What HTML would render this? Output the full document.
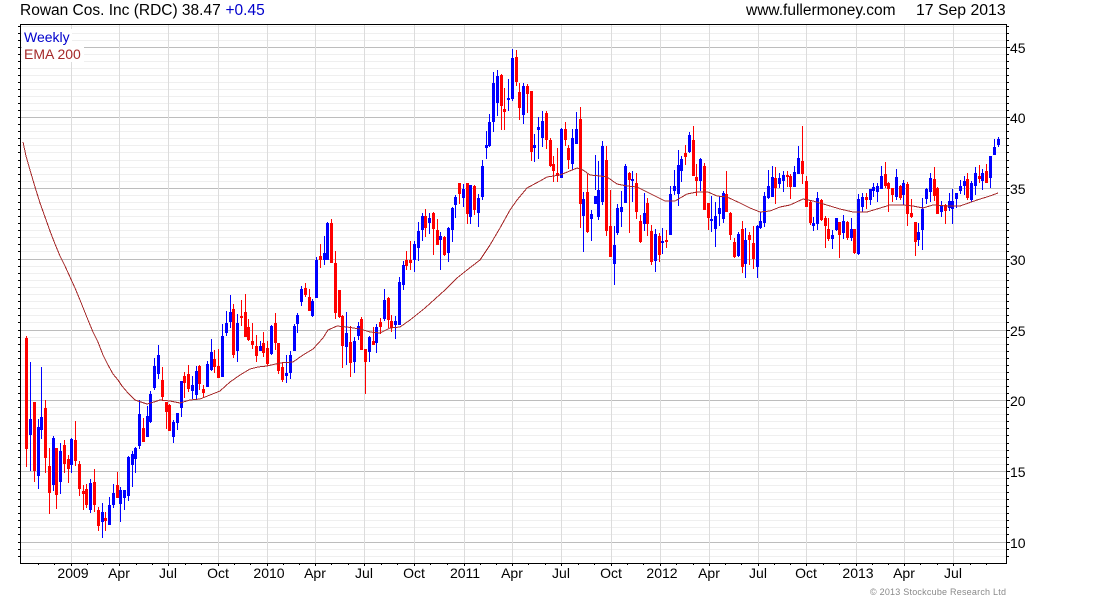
<!DOCTYPE html>
<html lang="en">
<head>
<meta charset="utf-8">
<title>Rowan Cos. Inc (RDC)</title>
<style>
html,body{margin:0;padding:0;background:#fff;width:1100px;height:600px;overflow:hidden}
svg{display:block}
text{font-family:"Liberation Sans",Arial,sans-serif;font-size:14px;fill:#000}
.t{font-size:15.5px}
</style>
</head>
<body>
<svg width="1100" height="600" viewBox="0 0 1100 600" xmlns="http://www.w3.org/2000/svg">
<g shape-rendering="crispEdges" fill="none">
<path stroke="#efefef" d="M21 26.5H1006M21 33.5H1006M21 40.5H1006M21 54.5H1006M21 61.5H1006M21 68.5H1006M21 75.5H1006M21 82.5H1006M21 89.5H1006M21 96.5H1006M21 103.5H1006M21 110.5H1006M21 124.5H1006M21 131.5H1006M21 138.5H1006M21 145.5H1006M21 152.5H1006M21 160.5H1006M21 167.5H1006M21 174.5H1006M21 181.5H1006M21 195.5H1006M21 202.5H1006M21 209.5H1006M21 216.5H1006M21 223.5H1006M21 230.5H1006M21 237.5H1006M21 244.5H1006M21 251.5H1006M21 266.5H1006M21 273.5H1006M21 280.5H1006M21 287.5H1006M21 294.5H1006M21 301.5H1006M21 308.5H1006M21 315.5H1006M21 322.5H1006M21 337.5H1006M21 344.5H1006M21 351.5H1006M21 358.5H1006M21 365.5H1006M21 372.5H1006M21 379.5H1006M21 386.5H1006M21 393.5H1006M21 407.5H1006M21 414.5H1006M21 421.5H1006M21 428.5H1006M21 435.5H1006M21 443.5H1006M21 450.5H1006M21 457.5H1006M21 464.5H1006M21 478.5H1006M21 485.5H1006M21 492.5H1006M21 499.5H1006M21 506.5H1006M21 513.5H1006M21 520.5H1006M21 527.5H1006M21 534.5H1006M21 549.5H1006M21 556.5H1006"/>
<path stroke="#bdbdbd" d="M21 47.5H1006M21 117.5H1006M21 188.5H1006M21 259.5H1006M21 330.5H1006M21 400.5H1006M21 471.5H1006M21 542.5H1006"/>
<path stroke="#dcdcdc" d="M71.5 25V563M119.5 25V563M168.5 25V563M218.5 25V563M267.5 25V563M315.5 25V563M364.5 25V563M414.5 25V563M464.5 25V563M512.5 25V563M561.5 25V563M611.5 25V563M660.5 25V563M709.5 25V563M758.5 25V563M806.5 25V563M856.5 25V563M904.5 25V563M953.5 25V563"/>
</g>

<!-- legend backgrounds -->
<rect x="22" y="29" width="50" height="17" fill="#fff"/>
<rect x="22" y="46" width="62" height="16" fill="#fff"/>

<g shape-rendering="crispEdges" fill="none">
<!-- red wicks -->
<path stroke="#ff0000" stroke-width="1" d="M26.5 336V467M34.5 402V482M45.5 400V473M49.5 448V514M56.5 448V509M64.5 440V473M68.5 455V483M75.5 421V466M79.5 461V496M83.5 485V510M86.5 484V508M94.5 469V512M98.5 507V531M105.5 512V531M117.5 472V498M143.5 418V442M162.5 367V401M166.5 402V429M169.5 404V431M184.5 372V398M188.5 365V392M199.5 365V390M203.5 385V398M214.5 350V373M218.5 349V378M233.5 304V358M241.5 300V326M245.5 294V337M248.5 319V341M252.5 323V349M256.5 335V362M263.5 332V357M267.5 341V366M275.5 313V350M278.5 343V374M282.5 362V382M305.5 283V297M309.5 289V311M320.5 244V268M331.5 219V263M335.5 251V319M339.5 290V318M342.5 315V368M350.5 326V377M361.5 317V350M365.5 349V394M373.5 327V345M380.5 318V334M388.5 297V328M391.5 315V332M406.5 251V270M410.5 241V270M425.5 209V237M433.5 212V255M437.5 219V245M444.5 236V256M459.5 183V204M467.5 183V224M474.5 185V215M501.5 74V130M504.5 88V130M516.5 50V86M519.5 83V120M527.5 84V113M531.5 91V161M546.5 111V149M550.5 138V167M553.5 156V182M557.5 148V182M565.5 122V146M568.5 145V169M580.5 107V228M587.5 174V233M606.5 146V236M610.5 190V257M629.5 172V233M636.5 173V219M640.5 215V243M647.5 198V236M651.5 225V265M659.5 233V262M666.5 230V248M685.5 145V165M693.5 126V176M696.5 164V196M704.5 163V210M708.5 203V230M726.5 171V212M730.5 212V240M734.5 238V258M742.5 221V273M749.5 232V265M753.5 226V269M775.5 167V204M787.5 171V187M790.5 174V199M802.5 126V184M806.5 176V207M810.5 200V225M821.5 199V221M825.5 216V248M828.5 218V241M839.5 222V258M847.5 221V240M854.5 229V254M866.5 193V209M885.5 162V188M888.5 182V212M892.5 188V202M900.5 185V200M907.5 182V226M911.5 199V218M915.5 222V256M934.5 167V201M937.5 187V214M945.5 204V224M967.5 173V200M979.5 165V183M986.5 164V183"/>
<!-- red bodies -->
<path stroke="#ff0000" stroke-width="3" d="M26.5 338V449M34.5 402V471M45.5 408V458M49.5 466V493M56.5 448V495M64.5 445V464M68.5 459V469M75.5 440V461M79.5 464V489M83.5 491V494M86.5 489V505M94.5 482V505M98.5 510V526M105.5 518V521M117.5 485V498M143.5 428V442M162.5 380V397M166.5 402V412M169.5 405V431M184.5 376V383M188.5 374V389M199.5 366V384M203.5 389V393M214.5 359V367M218.5 366V378M233.5 309V355M241.5 316V318M245.5 312V337M248.5 327V340M252.5 341V345M256.5 346V356M263.5 343V353M267.5 348V364M275.5 323V343M278.5 343V371M282.5 367V380M305.5 288V295M309.5 297V311M320.5 256V260M331.5 223V263M335.5 263V313M339.5 290V317M342.5 316V346M350.5 342V363M361.5 319V350M365.5 349V362M373.5 341V345M380.5 322V327M388.5 298V320M391.5 321V328M406.5 260V266M410.5 260V263M425.5 216V228M433.5 213V229M437.5 230V245M444.5 237V255M459.5 183V194M467.5 183V214M474.5 186V210M501.5 75V106M504.5 109V112M516.5 57V82M519.5 92V108M527.5 86V94M531.5 91V152M546.5 113V140M550.5 140V166M553.5 164V171M557.5 173V176M565.5 129V140M568.5 148V160M580.5 119V204M587.5 192V232M606.5 160V231M610.5 226V257M629.5 173V180M636.5 183V212M640.5 221V242M647.5 203V224M651.5 231V262M659.5 236V255M666.5 240V242M685.5 153V157M693.5 140V176M696.5 177V181M704.5 166V210M708.5 203V218M726.5 194V212M730.5 213V235M734.5 242V257M742.5 229V267M749.5 235V240M753.5 243V259M775.5 178V188M787.5 175V177M790.5 176V187M802.5 161V174M806.5 181V207M810.5 202V223M821.5 200V220M825.5 218V226M828.5 229V239M839.5 222V235M847.5 222V238M854.5 229V253M866.5 197V200M885.5 174V186M888.5 183V189M892.5 188V195M900.5 186V198M907.5 184V214M911.5 213V217M915.5 222V242M934.5 179V196M937.5 188V214M945.5 205V211M967.5 179V198M979.5 176V179M986.5 171V183"/>
<!-- blue wicks -->
<path stroke="#0000ff" stroke-width="1" d="M30.5 362V471M38.5 419V489M41.5 367V439M53.5 436V491M60.5 443V494M71.5 438V473M90.5 479V513M102.5 503V538M109.5 497V525M113.5 484V508M120.5 487V522M124.5 490V510M128.5 456V501M132.5 451V487M135.5 447V473M139.5 400V449M147.5 406V437M150.5 391V423M154.5 358V390M158.5 345V379M173.5 420V443M177.5 413V430M181.5 381V417M192.5 376V399M196.5 366V399M207.5 361V387M211.5 339V371M222.5 324V377M226.5 311V336M230.5 295V328M237.5 314V362M260.5 341V351M271.5 325V355M286.5 355V383M290.5 351V379M294.5 324V351M297.5 313V333M301.5 286V306M312.5 299V317M316.5 257V298M324.5 236V265M327.5 222V260M346.5 312V365M354.5 337V373M358.5 322V340M369.5 336V362M376.5 324V353M384.5 289V321M395.5 316V339M399.5 277V325M403.5 261V290M414.5 241V272M418.5 222V261M422.5 213V241M429.5 213V234M440.5 232V270M448.5 227V262M452.5 207V242M455.5 195V218M463.5 184V207M470.5 185V224M478.5 194V227M482.5 160V200M486.5 131V159M489.5 114V147M493.5 72V132M497.5 70V116M508.5 79V111M512.5 49V101M523.5 83V124M534.5 134V162M538.5 117V159M542.5 111V147M561.5 128V178M572.5 129V170M576.5 112V143M583.5 192V252M591.5 210V241M595.5 155V190M598.5 161V220M602.5 141V205M614.5 226V285M617.5 204V235M621.5 191V227M625.5 164V203M632.5 171V202M644.5 193V231M655.5 229V272M662.5 228V254M670.5 186V235M674.5 170V195M678.5 150V206M681.5 156V182M689.5 132V153M700.5 158V191M711.5 196V232M715.5 202V247M719.5 196V226M723.5 191V223M738.5 232V257M745.5 228V278M757.5 225V278M760.5 212V229M764.5 192V227M768.5 170V199M772.5 166V197M779.5 173V188M783.5 171V192M794.5 166V187M798.5 146V174M813.5 217V231M817.5 192V230M832.5 230V249M836.5 218V231M843.5 215V239M851.5 218V241M858.5 194V255M862.5 193V212M870.5 189V205M873.5 183V197M877.5 183V202M881.5 166V189M896.5 169V200M903.5 180V205M918.5 223V246M922.5 198V250M926.5 188V204M930.5 173V202M941.5 201V217M949.5 193V211M952.5 189V224M956.5 193V208M960.5 180V194M964.5 176V195M971.5 181V202M975.5 167V195M982.5 169V190M990.5 156V188M994.5 139V155M998.5 137V147"/>
<!-- blue bodies -->
<path stroke="#0000ff" stroke-width="3" d="M30.5 419V435M38.5 427V476M41.5 417V430M53.5 438V485M60.5 451V482M71.5 439V465M90.5 483V510M102.5 512V522M109.5 505V525M113.5 493V505M120.5 490V504M124.5 490V498M128.5 457V496M132.5 454V465M135.5 448V459M139.5 414V446M147.5 416V437M150.5 394V422M154.5 366V388M158.5 355V374M173.5 422V437M177.5 413V423M181.5 381V408M192.5 385V391M196.5 371V395M207.5 364V387M211.5 352V370M222.5 336V377M226.5 323V333M230.5 312V322M237.5 323V351M260.5 346V351M271.5 326V354M286.5 373V376M290.5 355V373M294.5 326V351M297.5 315V324M301.5 289V302M312.5 301V316M316.5 260V298M324.5 253V260M327.5 223V260M346.5 333V347M354.5 341V362M358.5 326V336M369.5 337V352M376.5 327V343M384.5 300V319M395.5 321V325M399.5 282V325M403.5 265V285M414.5 244V260M418.5 231V248M422.5 216V230M429.5 218V223M440.5 236V240M448.5 228V253M452.5 208V230M455.5 197V205M463.5 189V198M470.5 185V217M478.5 198V213M482.5 166V197M486.5 145V148M489.5 122V146M493.5 83V122M497.5 76V103M508.5 98V100M512.5 58V99M523.5 86V115M534.5 145V148M538.5 127V130M542.5 121V138M561.5 129V178M572.5 138V164M576.5 129V144M583.5 199V216M591.5 214V219M595.5 196V204M598.5 190V217M602.5 146V202M614.5 245V264M617.5 208V233M621.5 207V212M625.5 166V203M632.5 179V181M644.5 213V224M655.5 234V261M662.5 241V243M670.5 194V235M674.5 186V191M678.5 165V194M681.5 159V171M689.5 135V152M700.5 159V181M711.5 219V221M715.5 216V229M719.5 208V214M723.5 193V219M738.5 234V256M745.5 240V264M757.5 226V267M760.5 221V228M764.5 196V223M768.5 186V198M772.5 177V197M779.5 178V184M783.5 175V181M794.5 172V187M798.5 158V174M813.5 223V226M817.5 198V224M832.5 235V239M836.5 218V230M843.5 221V233M851.5 229V238M858.5 199V254M862.5 197V207M870.5 189V200M873.5 187V191M877.5 186V192M881.5 176V189M896.5 177V197M903.5 183V195M918.5 232V240M922.5 209V230M926.5 189V199M930.5 178V192M941.5 206V212M949.5 201V208M952.5 201V209M956.5 193V199M960.5 186V191M964.5 181V186M971.5 183V200M975.5 173V186M982.5 173V181M990.5 156V178M994.5 147V155M998.5 139V145"/>
</g>

<!-- EMA 200 -->
<polyline fill="none" stroke="#a52a2a" stroke-width="1" shape-rendering="crispEdges" points="23,142 26,156 30,170 35,187 40,203 45,217 50,231 55,244 60,256 65,266 70,277 75,288 80,300 84,310 88,320 93,332 98,342 103,355 107,363 113,374 118,380 122,386 128,393 135,400 141,402 147,404 154,402 160,400 170,401 180,403 190,400 200,399 210,395 220,391 230,382 240,375 250,369 258,367 267,366 280,363 293,362 303,355 313,349 323,338 328,330 337,326 347,327 360,329 370,332 380,333 390,328 400,327 410,320 425,308 435,299 445,290 457,278 467,270 480,260 490,245 500,228 510,210 517,200 527,188 540,181 547,177 560,175 577,168 583,170 590,175 600,176 607,177 617,184 627,186 637,187 647,192 657,197 665,201 675,201 687,194 697,192 708,192 717,196 727,197 740,203 750,208 760,212 770,211 780,207 790,205 803,199 813,201 820,203 830,206 840,209 853,212 867,212 877,209 890,205 903,205 913,206 923,208 933,205 947,206 960,206 977,200 990,196 998,193"/>

<!-- axes and ticks -->
<g shape-rendering="crispEdges" fill="none" stroke="#000">
<path d="M20.5 24.5H1006.5V563.5H20.5Z"/>
<path d="M18 26.5H20M18 33.5H20M18 40.5H20M18 47.5H20M18 54.5H20M18 61.5H20M18 68.5H20M18 75.5H20M18 82.5H20M18 89.5H20M18 96.5H20M18 103.5H20M18 110.5H20M18 117.5H20M18 124.5H20M18 131.5H20M18 138.5H20M18 145.5H20M18 152.5H20M18 160.5H20M18 167.5H20M18 174.5H20M18 181.5H20M18 188.5H20M18 195.5H20M18 202.5H20M18 209.5H20M18 216.5H20M18 223.5H20M18 230.5H20M18 237.5H20M18 244.5H20M18 251.5H20M18 259.5H20M18 266.5H20M18 273.5H20M18 280.5H20M18 287.5H20M18 294.5H20M18 301.5H20M18 308.5H20M18 315.5H20M18 322.5H20M18 330.5H20M18 337.5H20M18 344.5H20M18 351.5H20M18 358.5H20M18 365.5H20M18 372.5H20M18 379.5H20M18 386.5H20M18 393.5H20M18 400.5H20M18 407.5H20M18 414.5H20M18 421.5H20M18 428.5H20M18 435.5H20M18 443.5H20M18 450.5H20M18 457.5H20M18 464.5H20M18 471.5H20M18 478.5H20M18 485.5H20M18 492.5H20M18 499.5H20M18 506.5H20M18 513.5H20M18 520.5H20M18 527.5H20M18 534.5H20M18 542.5H20M18 549.5H20M18 556.5H20"/>
<path d="M1007 26.5H1009M1007 33.5H1009M1007 40.5H1009M1007 47.5H1010M1007 54.5H1009M1007 61.5H1009M1007 68.5H1009M1007 75.5H1009M1007 82.5H1009M1007 89.5H1009M1007 96.5H1009M1007 103.5H1009M1007 110.5H1009M1007 117.5H1010M1007 124.5H1009M1007 131.5H1009M1007 138.5H1009M1007 145.5H1009M1007 152.5H1009M1007 160.5H1009M1007 167.5H1009M1007 174.5H1009M1007 181.5H1009M1007 188.5H1010M1007 195.5H1009M1007 202.5H1009M1007 209.5H1009M1007 216.5H1009M1007 223.5H1009M1007 230.5H1009M1007 237.5H1009M1007 244.5H1009M1007 251.5H1009M1007 259.5H1010M1007 266.5H1009M1007 273.5H1009M1007 280.5H1009M1007 287.5H1009M1007 294.5H1009M1007 301.5H1009M1007 308.5H1009M1007 315.5H1009M1007 322.5H1009M1007 330.5H1010M1007 337.5H1009M1007 344.5H1009M1007 351.5H1009M1007 358.5H1009M1007 365.5H1009M1007 372.5H1009M1007 379.5H1009M1007 386.5H1009M1007 393.5H1009M1007 400.5H1010M1007 407.5H1009M1007 414.5H1009M1007 421.5H1009M1007 428.5H1009M1007 435.5H1009M1007 443.5H1009M1007 450.5H1009M1007 457.5H1009M1007 464.5H1009M1007 471.5H1010M1007 478.5H1009M1007 485.5H1009M1007 492.5H1009M1007 499.5H1009M1007 506.5H1009M1007 513.5H1009M1007 520.5H1009M1007 527.5H1009M1007 534.5H1009M1007 542.5H1010M1007 549.5H1009M1007 556.5H1009"/>
<path d="M38.5 564V565M54.5 564V565M71.5 564V566M87.5 564V565M103.5 564V565M119.5 564V566M136.5 564V565M152.5 564V565M168.5 564V566M185.5 564V565M201.5 564V565M218.5 564V566M234.5 564V565M250.5 564V565M267.5 564V566M283.5 564V565M299.5 564V565M315.5 564V566M331.5 564V565M348.5 564V565M364.5 564V566M381.5 564V565M397.5 564V565M414.5 564V566M430.5 564V565M447.5 564V565M464.5 564V566M480.5 564V565M496.5 564V565M512.5 564V566M528.5 564V565M545.5 564V565M561.5 564V566M578.5 564V565M594.5 564V565M611.5 564V566M627.5 564V565M643.5 564V565M660.5 564V566M676.5 564V565M693.5 564V565M709.5 564V566M725.5 564V565M741.5 564V565M758.5 564V566M774.5 564V565M790.5 564V565M806.5 564V566M823.5 564V565M839.5 564V565M856.5 564V566M872.5 564V565M888.5 564V565M904.5 564V566M920.5 564V565M937.5 564V565M953.5 564V566M970.5 564V565M986.5 564V565"/>
</g>

<!-- header -->
<text class="t" x="20" y="15">Rowan Cos. Inc (RDC) 38.47</text>
<text class="t" x="225.5" y="15" style="fill:#0000cc">+0.45</text>
<text class="t" x="746" y="15">www.fullermoney.com</text>
<text x="916" y="15" style="font-size:15.8px">17 Sep 2013</text>

<!-- legend -->
<text x="24" y="42" style="fill:#0000cc">Weekly</text>
<text x="24" y="59" style="fill:#a52a2a">EMA 200</text>

<!-- y labels -->
<text x="1010" y="53">45</text>
<text x="1010" y="123">40</text>
<text x="1010" y="194">35</text>
<text x="1010" y="265">30</text>
<text x="1010" y="336">25</text>
<text x="1010" y="406">20</text>
<text x="1010" y="477">15</text>
<text x="1010" y="548">10</text>

<!-- x labels -->
<g text-anchor="middle">
<text x="73" y="578">2009</text>
<text x="119" y="578">Apr</text>
<text x="168" y="578">Jul</text>
<text x="218" y="578">Oct</text>
<text x="269" y="578">2010</text>
<text x="315" y="578">Apr</text>
<text x="364" y="578">Jul</text>
<text x="414" y="578">Oct</text>
<text x="465" y="578">2011</text>
<text x="512" y="578">Apr</text>
<text x="561" y="578">Jul</text>
<text x="611" y="578">Oct</text>
<text x="662" y="578">2012</text>
<text x="709" y="578">Apr</text>
<text x="758" y="578">Jul</text>
<text x="806" y="578">Oct</text>
<text x="858" y="578">2013</text>
<text x="904" y="578">Apr</text>
<text x="953" y="578">Jul</text>
</g>

<text x="870" y="595" textLength="136" lengthAdjust="spacing" style="font-size:9px;fill:#8a8a8a">© 2013 Stockcube Research Ltd</text>
</svg>
</body>
</html>
